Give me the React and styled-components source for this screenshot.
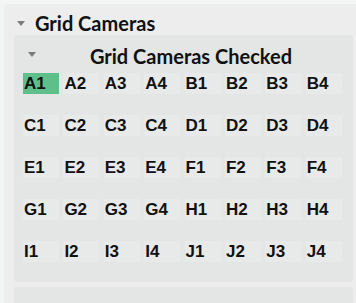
import styled, { createGlobalStyle } from "styled-components";

const GlobalStyle = createGlobalStyle`
  body {
    margin: 0;
    background: #f3f4f4;
    font-family: "Lato", "Liberation Sans", sans-serif;
    overflow: hidden;
  }
`;

const rows = ["A", "C", "E", "G", "I"];
const next = { A: "B", C: "D", E: "F", G: "H", I: "J" };

const App = () => {
  const selected = "A1";

  return (
    <>
      <GlobalStyle />
      <Page>
        <Section>
          <Header>
            <Caret />
            <Title>Grid Cameras</Title>
          </Header>
          <Panel>
            <PanelHeader>
              <Caret $inner />
              <PanelTitle>Grid Cameras Checked</PanelTitle>
            </PanelHeader>
            <Grid>
              {rows.map((r) =>
                [r, next[r]].flatMap((letter) =>
                  [1, 2, 3, 4].map((n) => {
                    const id = `${letter}${n}`;
                    return (
                      <Cell key={id} $active={id === selected}>
                        {id}
                      </Cell>
                    );
                  })
                )
              )}
            </Grid>
          </Panel>
          <Panel $next>
            <PanelHeader>
              <PanelTitle $left>A1</PanelTitle>
            </PanelHeader>
          </Panel>
        </Section>
      </Page>
    </>
  );
};

export default App;

const Page = styled.div`
  padding: 4px 0 0 4px;
  height: 303px;
  box-sizing: border-box;
  overflow: hidden;
`;

const Section = styled.section`
  background: #ecedec;
  border-radius: 4px 0 0 0;
  padding: 0 3px 0 10px;
  display: flex;
  flex-direction: column;
  min-height: 320px;
`;

const Header = styled.div`
  display: flex;
  align-items: center;
  height: 31px;
  margin-left: 3px;
  gap: 10px;
  padding-top: 6px;
  box-sizing: border-box;
`;

const Caret = styled.span`
  display: block;
  width: 0;
  height: 0;
  border-left: 4.5px solid transparent;
  border-right: 4.5px solid transparent;
  border-top: 5px solid #7b7c7c;
  margin-top: 1px;
`;

const Title = styled.h2`
  margin: 0;
  font-size: 20px;
  font-weight: 700;
  color: #111;
`;

const Panel = styled.div`
  background: #e4e5e5;
  border-radius: 4px;
  padding: 5px 7px 20px 9px;
  margin-top: ${(p) => (p.$next ? "5px" : "0")};
`;

const PanelHeader = styled.div`
  display: flex;
  align-items: center;
  height: 28px;
  padding-left: 5px;
`;

const PanelTitle = styled.h3`
  flex: 1;
  margin: 0;
  padding-top: 4px;
  font-size: 20px;
  font-weight: 700;
  color: #111;
  text-align: ${(p) => (p.$left ? "left" : "center")};
  padding-left: ${(p) => (p.$left ? "24px" : "0")};
  margin-top: ${(p) => (p.$left ? "14px" : "0")};
`;

const Grid = styled.div`
  display: grid;
  grid-template-columns: repeat(8, 36px);
  column-gap: 4.4px;
  row-gap: 21px;
  margin-top: 5px;
`;

const Cell = styled.div`
  height: 21px;
  display: flex;
  align-items: center;
  padding-left: 1px;
  font-family: "Liberation Sans", Arial, sans-serif;
  font-weight: 700;
  font-size: 17px;
  color: #111;
  background: ${(p) => (p.$active ? "#5ebf8b" : "#e8e9e9")};
`;
